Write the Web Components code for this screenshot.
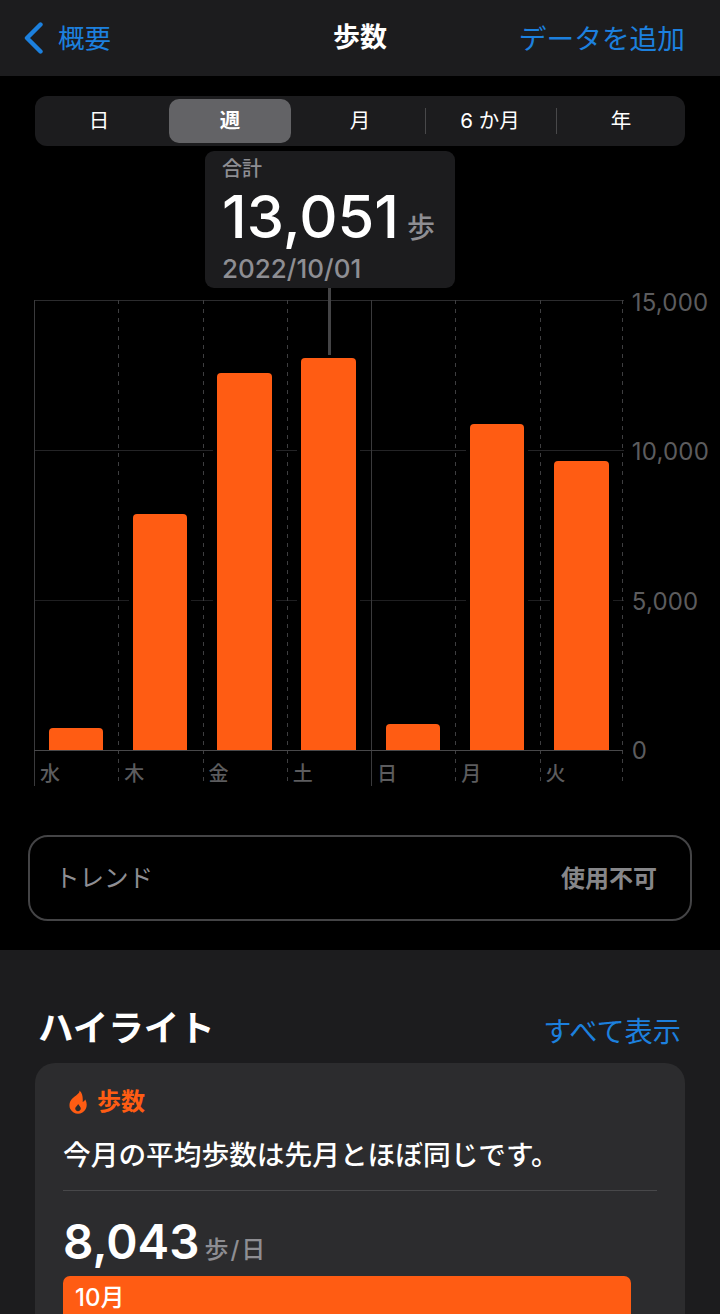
<!DOCTYPE html>
<html lang="ja"><head><meta charset="utf-8"><title>歩数</title>
<style>
html,body{margin:0;padding:0;background:#000;height:1314px;overflow:hidden}
body{font-family:Inter,"Noto Sans CJK JP",sans-serif;color:#fff}
</style></head><body>
<health-navbar></health-navbar>
<range-picker></range-picker>
<total-callout></total-callout>
<steps-chart></steps-chart>
<trend-card></trend-card>
<highlights-section></highlights-section>
<script>
const FONT='Inter,"Noto Sans CJK JP",sans-serif';
const BLUE='#1c80de';
function def(name,html){customElements.define(name,class extends HTMLElement{constructor(){super();this.attachShadow({mode:'open'}).innerHTML=html}})}
def('health-navbar',`<style>
:host{display:grid;grid-template-columns:1fr auto 1fr;align-items:center;height:76px;background:#1c1c1e;padding:0 24px;font-family:${FONT}}
.back{display:flex;align-items:center;gap:15px;color:${BLUE};font-size:26.5px}
.back span{margin-top:-3px}
svg{display:block}
.t{font-size:27px;font-weight:700;color:#fff;line-height:1;margin-top:-1px}
.a{justify-self:end;margin-right:11px;margin-top:-2px;color:${BLUE};font-size:27.7px;white-space:nowrap}
</style>
<div class="back"><svg width="19" height="32" viewBox="0 0 19 32"><path d="M16.5 2.5 3 16l13.5 13.5" fill="none" stroke="${BLUE}" stroke-width="4.4" stroke-linecap="round" stroke-linejoin="round"/></svg><span>概要</span></div>
<div class="t">歩数</div><div class="a">データを追加</div>`);
def('range-picker',`<style>
:host{display:grid;grid-template-columns:134px 122px 134px 131px 1fr;align-items:center;margin:20px 35px 0;height:50px;background:#1c1c1e;border-radius:12px;font-family:${FONT};font-size:20.5px;font-weight:400;color:#fff;box-sizing:border-box}
div{display:flex;align-items:center;justify-content:center;line-height:1}
.d{padding-right:6px}
.m{padding-left:4px}
.s{height:44px;background:#636366;border-radius:10px;font-weight:700}
.b{height:26px;border-left:1.5px solid #48484a}
.x{padding-right:2px}
</style>
<div class="d">日</div><div class="s">週</div><div class="m">月</div><div class="b x">6 か月</div><div class="b">年</div>`);
def('total-callout',`<style>
:host{display:block;box-sizing:border-box;width:250px;height:137px;margin:5px 0 0 205px;padding:5px 18px 0 17px;background:#1c1c1e;border-radius:9px;font-family:${FONT}}
.l{font-size:20px;font-weight:500;color:#8e8e93;line-height:26px}
.v{display:flex;align-items:baseline;gap:8px;height:62px;line-height:62px;margin-top:3px;font-size:59.5px;font-weight:500;color:#fff;white-space:nowrap}
.v span{font-size:28px;color:#8e8e93;font-weight:500}
.d{font-size:26px;font-weight:500;color:#8e8e93;line-height:32px;margin-top:6px;white-space:nowrap}
</style><div class="l">合計</div><div class="v">13,051<span>歩</span></div><div class="d">2022/10/01</div>`);
const days=[['水',22],['木',236],['金',377],['土',392],['日',26],['月',326],['火',289]];
const DASH='repeating-linear-gradient(#3e3e40 0 4px,transparent 4px 9px)';
def('steps-chart',`<style>
:host{display:flex;margin:12px 0 0 34px;height:485px;font-family:${FONT}}
.plot{position:relative;display:grid;grid-template-columns:repeat(7,84.25px);width:589.75px;height:485px;
 background-image:linear-gradient(#2c2c2e,#2c2c2e),linear-gradient(#242426,#242426),linear-gradient(#1f1f21,#1f1f21);
 background-size:100% 1px;background-repeat:no-repeat;background-position:0 0,0 150px,0 300px}
.plot::after{content:"";position:absolute;left:0;width:589px;top:450px;height:1px;background:#48484a}
.end{position:absolute;left:588px;top:0;bottom:0;width:1px;background:${DASH}}
.col{display:flex;flex-direction:column;background:${DASH} left top/1px 100% no-repeat}
.col.solid{background:linear-gradient(#3a3a3c,#3a3a3c) left top/1px 100% no-repeat}
.area{height:450px;display:flex;align-items:flex-end;padding-left:14.5px}
.bar{position:relative;width:54.7px;background:#ff5c13;border-radius:4px 4px 0 0;box-shadow:0 0 0 4px #000}
.bar.sel::before{content:"";position:absolute;left:27px;bottom:100%;margin-bottom:3px;width:3px;height:67px;background:#444446}
.lab{font-size:20px;font-weight:500;line-height:24px;color:#5c5c5e;padding:12px 0 0 6px}
.y{display:flex;flex-direction:column;justify-content:space-between;height:473px;margin:-9.5px 0 0 8px;font-size:24px;line-height:24px;color:#5c5c5e;letter-spacing:.2px}
</style>
<div class="plot">${days.map(([d,h],i)=>`<div class="col${i==0||i==4?' solid':''}"><div class="area"><div class="bar${i==3?' sel':''}" style="height:${h}px"></div></div><div class="lab">${d}</div></div>`).join('')}<div class="end"></div></div>
<div class="y"><div>15,000</div><div>10,000</div><div>5,000</div><div>0</div></div>`);
def('trend-card',`<style>
:host{display:flex;justify-content:space-between;align-items:center;box-sizing:border-box;height:86px;margin:50px 28px 29px;padding:0 33px 3px 25px;border:2px solid #444446;border-radius:20px;font-family:${FONT};font-size:24.5px;color:#8e8e93}
b{font-weight:700;font-size:24px;color:#868689}span{font-weight:400}
</style><span>トレンド</span><b>使用不可</b>`);
def('highlights-section',`<style>
:host{display:block;box-sizing:border-box;height:364px;background:#1c1c1e;padding:55px 35px 0;font-family:${FONT};overflow:hidden}
.h{display:flex;justify-content:space-between;align-items:center;height:48px;padding:0 4px 0 3px}
h2{margin:0;font-size:35.5px;font-weight:700;color:#fff;line-height:48px}
.all{font-size:28.2px;color:${BLUE};line-height:1;margin-top:6px}
.card{margin-top:10px;height:320px;box-sizing:border-box;background:#2c2c2e;border-radius:20px;padding:24px 28px 0}
.tag{display:flex;align-items:center;gap:10px;color:#ff5c13;font-size:24px;font-weight:700;line-height:30px;padding-left:6px}
svg{display:block}
p{margin:19px 0 0;font-size:27.7px;font-weight:500;line-height:38px;color:#fff;white-space:nowrap}
hr{margin:16px 0 0;border:0;height:1px;background:#48484a}
.n{display:flex;align-items:baseline;gap:5px;margin-top:20px;height:62px;line-height:62px;font-size:47.5px;font-weight:600;white-space:nowrap}
.n span{font-size:24px;font-weight:500;color:#8e8e93;letter-spacing:2px;position:relative;top:-1px}
.m{margin-top:3px;width:568px;height:60px;box-sizing:border-box;background:#ff5c13;border-radius:7px;padding:7px 12px;font-size:24px;font-weight:500;line-height:30px;color:#fff}
</style>
<div class="h"><h2>ハイライト</h2><div class="all">すべて表示</div></div>
<div class="card"><div class="tag"><svg width="18" height="24" viewBox="0 0 18 24"><path fill-rule="evenodd" fill="#ff5c13" d="M10.5 .5C11 4 4.500 6 1.800 10.500.3 13 0 16.500 1.300 19 2.900 22 6 23.800 9 23.800s6.200-1.800 7.700-4.800c1.500-3 1.300-6.500-.4-9.500-.6 1.200-1.500 2-2.600 2.500C14 7.500 13.500 3 10.500 .5ZM9.200 14c.4 1.500 2.600 2.400 2.600 4.600 0 1.500-1.200 2.600-2.800 2.600s-2.800-1.100-2.800-2.600c0-2 2.600-3 3-4.600Z"/></svg><span>歩数</span></div>
<p>今月の平均歩数は先月とほぼ同じです。</p><hr>
<div class="n">8,043<span>歩/日</span></div>
<div class="m">10月</div></div>`);
</script></body></html>
